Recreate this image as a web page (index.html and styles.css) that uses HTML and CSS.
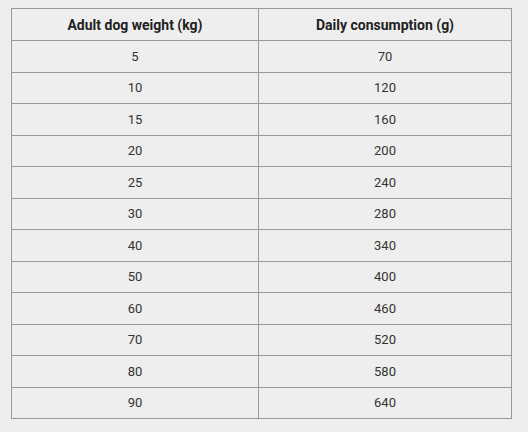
FILE: index.html
```html
<!DOCTYPE html>
<html>
<head>
<meta charset="utf-8">
<link rel="stylesheet" href="styles.css">
</head>
<body>
<table class="feed">
  <thead>
    <tr><th>Adult dog weight (kg)</th><th>Daily consumption (g)</th></tr>
  </thead>
  <tbody>
    <tr><td>5</td><td>70</td></tr>
    <tr><td>10</td><td>120</td></tr>
    <tr><td>15</td><td>160</td></tr>
    <tr><td>20</td><td>200</td></tr>
    <tr><td>25</td><td>240</td></tr>
    <tr><td>30</td><td>280</td></tr>
    <tr><td>40</td><td>340</td></tr>
    <tr><td>50</td><td>400</td></tr>
    <tr><td>60</td><td>460</td></tr>
    <tr><td>70</td><td>520</td></tr>
    <tr><td>80</td><td>580</td></tr>
    <tr><td>90</td><td>640</td></tr>
  </tbody>
</table>
</body>
</html>
```
FILE: styles.css
```css
html, body {
  margin: 0;
  background: #eeeeee;
}
body {
  padding: 8px 0 0 11px;
  font-family: Roboto, "Liberation Sans", sans-serif;
  font-size: 13px;
  color: #333333;
}
.feed {
  border-collapse: collapse;
  width: 501px;
}
.feed th, .feed td {
  border: 1px solid #999999;
  text-align: center;
  padding: 0;
}
.feed th {
  height: 31px;
  font-size: 14px;
  font-weight: 700;
  color: #222222;
}
.feed td {
  height: 30.5px;
}
.feed th:first-child, .feed td:first-child {
  width: 246px;
}
```
